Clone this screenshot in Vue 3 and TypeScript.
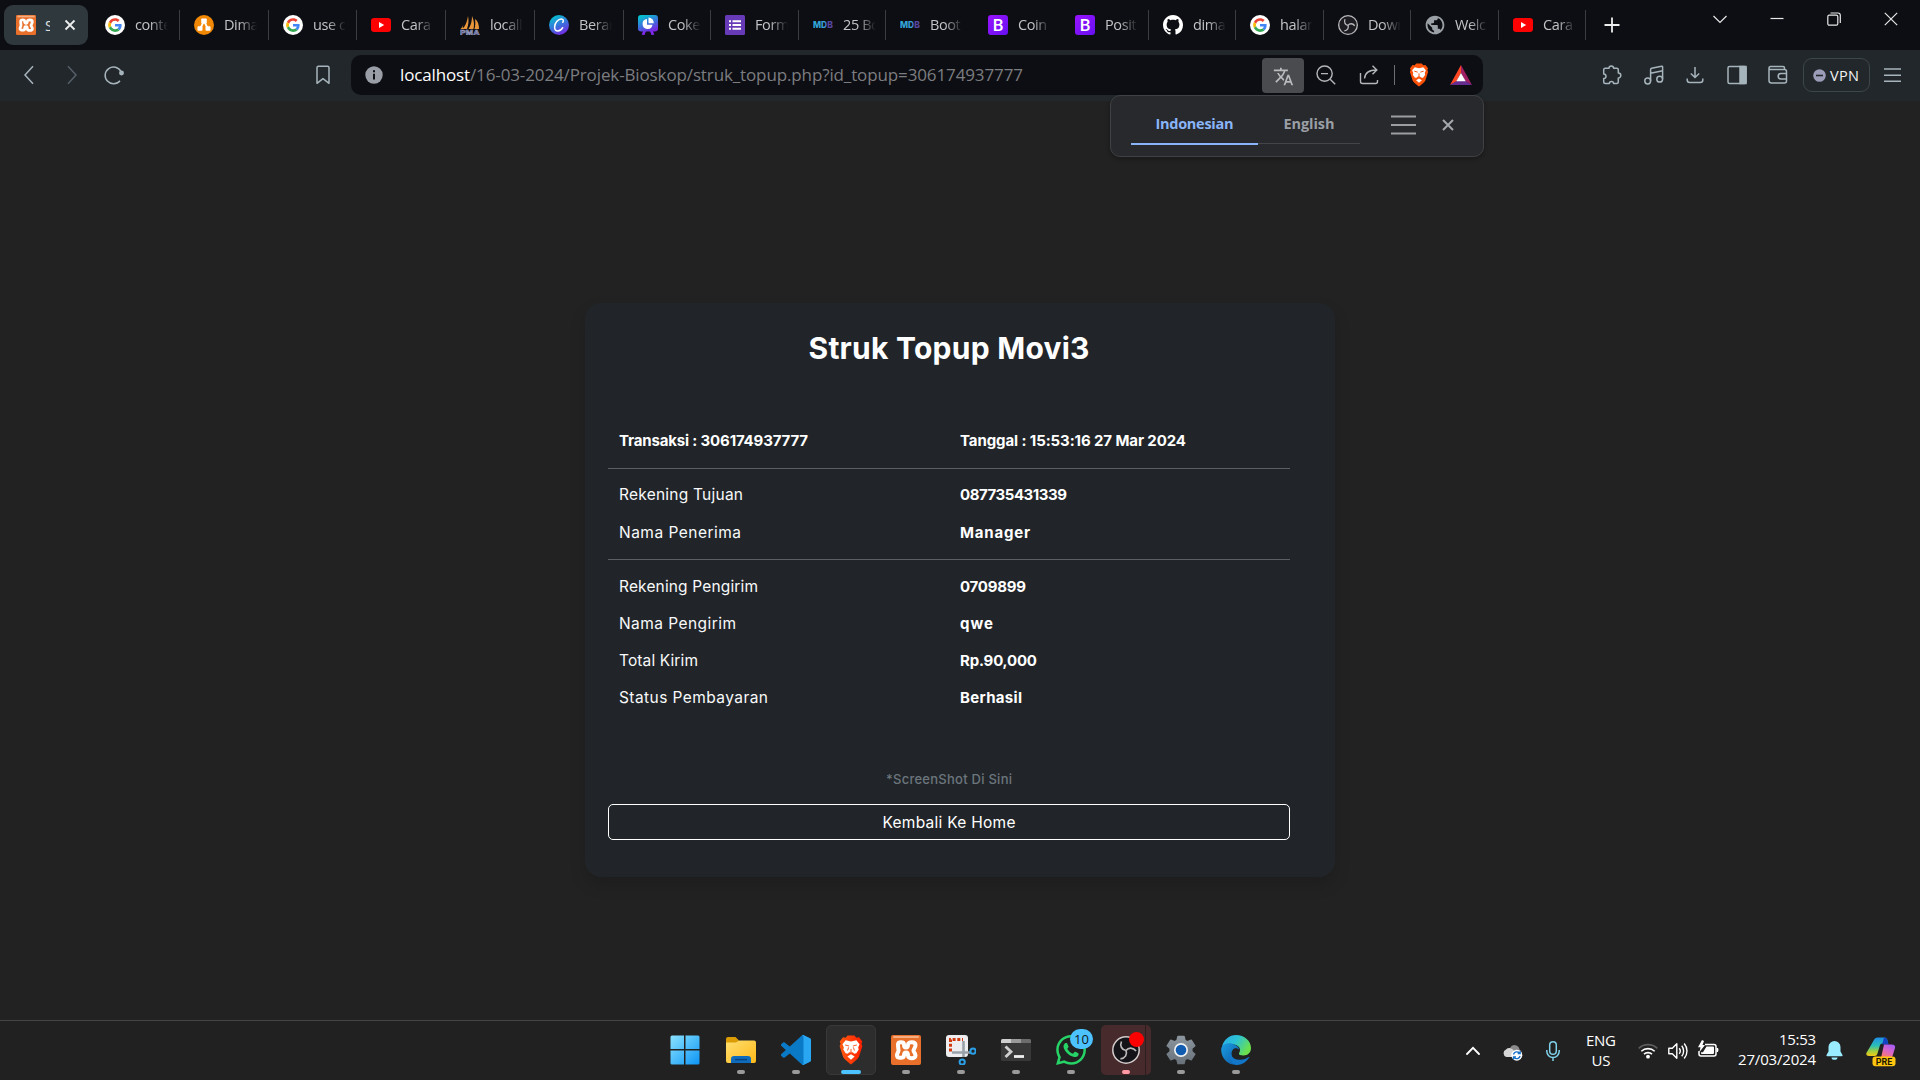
<script setup lang="ts">
import type { Directive } from 'vue'

interface Tab {
  icon: string
  title: string
  width: number
  divider: boolean
}

interface Row {
  label: string
  labelWidth: number
  value: string
  valueWidth: number
}

// Spreads a label over a given width by adjusting its tracking.
const vFit: Directive<HTMLElement, number> = {
  mounted(el, binding) {
    const count = (el.textContent ?? '').length
    if (count < 2) return
    const natural = el.getBoundingClientRect().width
    const tracking = (binding.value - natural) / (count - 1)
    el.style.letterSpacing = `${tracking}px`
    el.style.marginRight = `${-tracking}px`
  },
}

const tabs: Tab[] = [
  { icon: 'google', title: 'conte', width: 89, divider: true },
  { icon: 'drawio', title: 'Dima', width: 89, divider: true },
  { icon: 'google', title: 'use c', width: 88, divider: true },
  { icon: 'youtube', title: 'Cara', width: 89, divider: true },
  { icon: 'pma', title: 'locall', width: 89, divider: true },
  { icon: 'canva', title: 'Beran', width: 89, divider: true },
  { icon: 'deck', title: 'Coke', width: 87, divider: true },
  { icon: 'form', title: 'Form', width: 88, divider: true },
  { icon: 'mdb', title: '25 Bo', width: 87, divider: true },
  { icon: 'mdb', title: 'Boot', width: 88, divider: false },
  { icon: 'bootstrap', title: 'Coin', width: 87, divider: false },
  { icon: 'bootstrap', title: 'Posit', width: 88, divider: true },
  { icon: 'github', title: 'dima', width: 87, divider: true },
  { icon: 'google', title: 'halam', width: 88, divider: true },
  { icon: 'obs', title: 'Down', width: 87, divider: true },
  { icon: 'globe', title: 'Welc', width: 88, divider: true },
  { icon: 'youtube', title: 'Cara', width: 87, divider: true },
]

const head: Row = { label: 'Transaksi : 306174937777', labelWidth: 189, value: 'Tanggal : 15:53:16 27 Mar 2024', valueWidth: 226 }

const groups: Row[][] = [
  [
    { label: 'Rekening Tujuan', labelWidth: 124, value: '087735431339', valueWidth: 107 },
    { label: 'Nama Penerima', labelWidth: 122, value: 'Manager', valueWidth: 70 },
  ],
  [
    { label: 'Rekening Pengirim', labelWidth: 139, value: '0709899', valueWidth: 66 },
    { label: 'Nama Pengirim', labelWidth: 117, value: 'qwe', valueWidth: 33 },
    { label: 'Total Kirim', labelWidth: 79, value: 'Rp.90,000', valueWidth: 77 },
    { label: 'Status Pembayaran', labelWidth: 149, value: 'Berhasil', valueWidth: 62 },
  ],
]

const apps: string[] = ['windows', 'explorer', 'vscode', 'brave', 'xampp', 'snip', 'terminal', 'whatsapp', 'obs', 'settings', 'edge']
</script>

<template>
  <div class="desktop">
    <svg class="defs" width="0" height="0">
      <defs>
        <linearGradient id="g-win" x1="0" y1="0" x2="1" y2="1"><stop offset="0" stop-color="#8be3ff" /><stop offset="1" stop-color="#0d95f5" /></linearGradient>
        <linearGradient id="g-folder" x1="0" y1="0" x2="1" y2="1"><stop offset="0" stop-color="#ffdf70" /><stop offset="1" stop-color="#ffb918" /></linearGradient>
        <linearGradient id="g-brave" x1="0" y1="0" x2="1" y2="0"><stop offset="0" stop-color="#ff5a10" /><stop offset="1" stop-color="#ff1f00" /></linearGradient>
        <linearGradient id="g-canva" x1="0.2" y1="0" x2="0.7" y2="1"><stop offset="0" stop-color="#00c8cf" /><stop offset="0.55" stop-color="#3b6fdc" /><stop offset="1" stop-color="#7a24e4" /></linearGradient>
        <linearGradient id="g-boot" x1="0" y1="0" x2="1" y2="1"><stop offset="0" stop-color="#9a13ff" /><stop offset="1" stop-color="#6610f2" /></linearGradient>
        <linearGradient id="g-mdb" x1="0" y1="0" x2="1" y2="0"><stop offset="0" stop-color="#2fa8d8" /><stop offset="0.6" stop-color="#379fd8" /><stop offset="0.7" stop-color="#5545a0" /><stop offset="1" stop-color="#5545a0" /></linearGradient>
        <linearGradient id="g-edge" x1="0" y1="0" x2="1" y2="0.5"><stop offset="0" stop-color="#2aa9e8" /><stop offset="0.5" stop-color="#2cc3d5" /><stop offset="1" stop-color="#6be04c" /></linearGradient>
        <linearGradient id="g-edge2" x1="0" y1="0" x2="1" y2="1"><stop offset="0" stop-color="#1b9de2" /><stop offset="1" stop-color="#0c59a4" /></linearGradient>
        <linearGradient id="g-gear" x1="0" y1="0" x2="0" y2="1"><stop offset="0" stop-color="#8b959d" /><stop offset="1" stop-color="#69727a" /></linearGradient>
        <linearGradient id="g-cop1" x1="0" y1="0" x2="0" y2="1"><stop offset="0" stop-color="#1f8fe8" /><stop offset="0.45" stop-color="#2bbfb5" /><stop offset="0.75" stop-color="#a5cf3c" /><stop offset="1" stop-color="#f6c916" /></linearGradient>
        <linearGradient id="g-cop2" x1="0.8" y1="0" x2="0.3" y2="1"><stop offset="0" stop-color="#a35cf5" /><stop offset="0.5" stop-color="#d966c9" /><stop offset="1" stop-color="#fb7b6a" /></linearGradient>
      </defs>
    </svg>

    <header class="tabs">
      <div class="tab-active">
        <svg width="20" height="20" viewBox="0 0 30 30">
          <rect width="30" height="30" rx="2" fill="#e8702a" /><rect x="2" y="1" width="26" height="2.5" fill="#f5ad82" />
          <path d="M7 9.500c0-3 6-3 6 0 0 2 1 3 2 3s2-1 2-3c0-3 7.500-3 7.500 .5 0 3-2 4-2 5.500s2 2.500 2 5c0 3.500-7.500 3.500-7.500 0 0-2-1-3-2-3s-2 1-2 3c0 3-7 3-7 0 0-2.500 1.500-3.500 1.500-5s-.5-3.500-.5-6z" fill="none" stroke="#fff" stroke-width="4.200" stroke-linejoin="round" />
        </svg>
        <span class="tab-cut">S</span>
        <svg class="tab-close" width="12" height="12" viewBox="0 0 12 12" stroke="#eceded" stroke-width="1.8"><path d="M1.500 1.500l9 9M10.500 1.500l-9 9" /></svg>
      </div>
      <div v-for="(tab, i) in tabs" :key="i" class="tab" :class="{ divided: tab.divider }" :style="{ width: tab.width + 'px' }">
        <svg v-if="tab.icon === 'google'" width="20" height="20" viewBox="0 0 48 48">
          <circle cx="24" cy="24" r="24" fill="#fff" />
          <g transform="translate(7.500 7.500) scale(.69)">
            <path fill="#EA4335" d="M24 9.500c3.540 0 6.710 1.220 9.210 3.600l6.850-6.850C35.900 2.380 30.470 0 24 0 14.620 0 6.510 5.380 2.560 13.220l7.980 6.190C12.430 13.720 17.740 9.500 24 9.500z" />
            <path fill="#4285F4" d="M46.980 24.550c0-1.570-.15-3.090-.38-4.550H24v9.020h12.940c-.58 2.960-2.260 5.480-4.780 7.180l7.730 6c4.510-4.180 7.090-10.360 7.090-17.650z" />
            <path fill="#FBBC05" d="M10.530 28.590c-.48-1.450-.76-2.990-.76-4.590s.27-3.140.76-4.590l-7.980-6.190C.92 16.460 0 20.120 0 24c0 3.880.92 7.540 2.560 10.780l7.970-6.190z" />
            <path fill="#34A853" d="M24 48c6.480 0 11.930-2.130 15.890-5.810l-7.730-6c-2.150 1.450-4.920 2.300-8.160 2.300-6.260 0-11.570-4.220-13.470-9.910l-7.980 6.190C6.510 42.620 14.620 48 24 48z" />
          </g>
        </svg>
        <svg v-else-if="tab.icon === 'drawio'" width="20" height="20" viewBox="0 0 20 20">
          <circle cx="10" cy="10" r="10" fill="#f08705" /><path d="M10 6L6 14M10 6l4 8" stroke="#fff" stroke-width="1.800" /><rect x="7.200" y="3.500" width="5.600" height="5" rx=".8" fill="#fff" /><rect x="3.500" y="11.300" width="5" height="4.500" rx=".8" fill="#fff" /><rect x="11.500" y="11.300" width="5" height="4.500" rx=".8" fill="#fff" />
        </svg>
        <svg v-else-if="tab.icon === 'youtube'" width="20" height="20" viewBox="0 0 20 20"><rect y="3" width="20" height="14" rx="3.200" fill="#f00" /><path d="M8 7l5.200 3L8 13z" fill="#fff" /></svg>
        <svg v-else-if="tab.icon === 'pma'" width="20" height="20" viewBox="0 0 20 20">
          <path d="M8 1c1 4 .5 9-1 13H2c3-2 5-7 6-13zM12 1c2 4 2.500 9 1.500 13H8.500C11 10 12 6 12 1zM15 4c3 2 4 6 4 10h-4.500c1-3 1-7 .5-10zM3.500 8c0 2-1 4-3 6h2z" fill="#e9963a" />
          <text x="0" y="20" font-size="8" font-weight="700" fill="#4a4e80" stroke="#a9add0" stroke-width=".5" textLength="19.500" lengthAdjust="spacingAndGlyphs" font-family="Liberation Sans, sans-serif">PMA</text>
        </svg>
        <svg v-else-if="tab.icon === 'canva'" width="20" height="20" viewBox="0 0 20 20"><circle cx="10" cy="10" r="10" fill="url(#g-canva)" /><path d="M13.800 7.300c1-1.500.5-3.400-1.400-3.400C9 3.900 5.600 8 5.600 12c0 2.500 1.300 4 3.200 4 2 0 3.800-1.300 4.900-3.300" fill="none" stroke="#fff" stroke-width="1.500" stroke-linecap="round" /></svg>
        <svg v-else-if="tab.icon === 'deck'" width="20" height="20" viewBox="0 0 20 20"><path d="M7 15L5 20M13 15l2 5" stroke="#7d2ae8" stroke-width="2.800" /><rect width="20" height="16.500" rx="3" fill="url(#g-canva)" /><path d="M9 4a5 5 0 1 0 5.500 5.800H9z" fill="#fff" /><path d="M10.500 2.600a5.600 5.600 0 0 1 5.300 5.600h-5.300z" fill="#fff" /></svg>
        <svg v-else-if="tab.icon === 'form'" width="20" height="20" viewBox="0 0 20 20"><rect width="20" height="20" rx="1.500" fill="#673ab7" /><path d="M4 6.200h2M4 10h2M4 13.800h2M7.500 6.200H16M7.500 10H16M7.500 13.800H16" stroke="#fff" stroke-width="2" /></svg>
        <svg v-else-if="tab.icon === 'mdb'" width="20" height="20" viewBox="0 0 20 20"><text x="0" y="13.200" font-size="9" font-weight="800" textLength="20" lengthAdjust="spacingAndGlyphs" fill="url(#g-mdb)" font-family="Inter, sans-serif">MDB</text></svg>
        <svg v-else-if="tab.icon === 'bootstrap'" width="20" height="20" viewBox="0 0 20 20"><rect width="20" height="20" rx="3" fill="url(#g-boot)" /><text x="10" y="16" text-anchor="middle" font-size="17" font-weight="500" fill="#fff" font-family="Roboto, sans-serif">B</text></svg>
        <svg v-else-if="tab.icon === 'github'" width="20" height="20" viewBox="0 0 16 16"><path fill="#fff" d="M8 0C3.580 0 0 3.580 0 8c0 3.540 2.290 6.530 5.470 7.590.4.070.55-.17.55-.38 0-.19-.01-.82-.01-1.490-2.010.37-2.530-.49-2.690-.94-.09-.23-.48-.94-.82-1.130-.28-.15-.68-.52-.01-.53.63-.01 1.080.58 1.230.82.72 1.210 1.870.87 2.330.66.07-.52.28-.87.51-1.070-1.780-.2-3.640-.89-3.640-3.950 0-.87.31-1.590.82-2.150-.08-.2-.36-1.020.08-2.120 0 0 .67-.21 2.200.82.64-.18 1.320-.27 2-.27s1.360.09 2 .27c1.530-1.040 2.200-.82 2.200-.82.44 1.100.16 1.920.08 2.120.51.56.82 1.270.82 2.150 0 3.070-1.870 3.750-3.650 3.950.29.25.54.73.54 1.480 0 1.070-.01 1.930-.01 2.200 0 .21.15.46.55.38A8.010 8.010 0 0016 8c0-4.420-3.580-8-8-8z" /></svg>
        <svg v-else-if="tab.icon === 'obs'" width="20" height="20" viewBox="0 0 30 30"><circle cx="15" cy="15" r="14" fill="#1d1c20" stroke="#b9b9bb" stroke-width="2" /><g fill="none" stroke="#b9b9bb" stroke-width="2"><path d="M15 15.500C11 15 8.500 11 10.500 6.500" /><path d="M15 15.500C11 15 8.500 11 10.500 6.500" transform="rotate(120 15 15.500)" /><path d="M15 15.500C11 15 8.500 11 10.500 6.500" transform="rotate(240 15 15.500)" /></g></svg>
        <svg v-else width="20" height="20" viewBox="1.300 1.300 21.400 21.400"><path fill="#9aa0a6" d="M12 2C6.480 2 2 6.480 2 12s4.480 10 10 10 10-4.480 10-10S17.520 2 12 2zm-1 17.930c-3.950-.49-7-3.850-7-7.930 0-.62.080-1.210.210-1.790L9 15v1c0 1.100.9 2 2 2v1.930zm6.900-2.540c-.26-.81-1-1.390-1.900-1.390h-1v-3c0-.55-.45-1-1-1H8v-2h2c.55 0 1-.45 1-1V7h2c1.100 0 2-.9 2-2v-.41c2.930 1.190 5 4.060 5 7.410 0 2.080-.8 3.970-2.100 5.390z" /></svg>
        <span class="tab-title">{{ tab.title }}</span>
      </div>
      <svg class="plus" width="16" height="16" viewBox="0 0 16 16" stroke="#eceded" stroke-width="1.800"><path d="M8 .5v15M.5 8h15" /></svg>
      <div class="window-buttons">
        <svg width="14" height="14" viewBox="0 0 14 14"><path d="M.5 4L7 10.500 13.500 4" /></svg>
        <svg width="14" height="14" viewBox="0 0 14 14"><path d="M.5 6.500h13" /></svg>
        <svg width="14" height="14" viewBox="0 0 14 14"><rect x=".8" y="3.200" width="10" height="10" rx="1.500" /><path d="M3.500 1h7.500q2.300 0 2.300 2.300V11" /></svg>
        <svg width="14" height="14" viewBox="0 0 14 14"><path d="M.8.8l12.400 12.400M13.200.8L.8 13.200" /></svg>
      </div>
    </header>

    <nav class="toolbar">
      <div class="nav-left">
        <svg width="20" height="20" viewBox="0 0 20 20" stroke="#a6b4bc"><path d="M14 1.300L6 10l8 8.700" /></svg>
        <svg width="20" height="20" viewBox="0 0 20 20" stroke="#56606a"><path d="M6 1.300L14 10l-8 8.700" /></svg>
        <svg width="20" height="20" viewBox="0 0 20 20" stroke="#a6b4bc"><path d="M17 6.500A8.400 8.400 0 1 0 16 15.800" /><circle cx="17.500" cy="8" r="1.700" fill="#a6b4bc" /></svg>
      </div>
      <svg class="bookmark" width="14" height="20" viewBox="0 0 14 20" fill="none" stroke="#a6b4bc" stroke-width="1.500"><path d="M1 2.800q0-1.500 1.500-1.500h9q1.500 0 1.500 1.500v15.500L7 13.700l-6 4.600z" stroke-linejoin="round" /></svg>

      <div class="address">
        <svg class="info" width="18" height="18" viewBox="0 0 18 18"><circle cx="9" cy="9" r="8.700" fill="#9a9ea6" /><path d="M9 7.800v5.600M9 4.300v2" stroke="#0d0e13" stroke-width="2" /></svg>
        <div class="url"><span v-fit="70" class="fit host">localhost</span><span v-fit="553" class="fit">/16-03-2024/Projek-Bioskop/struk_topup.php?id_topup=306174937777</span></div>
        <div class="translate"><svg width="21" height="21" viewBox="0 0 24 24" fill="#b9bbbd"><path d="M12.870 15.070l-2.540-2.510.03-.03c1.740-1.940 2.980-4.170 3.710-6.530H17V4h-7V2H8v2H1v1.990h11.170C11.500 7.920 10.440 9.750 9 11.350 8.070 10.320 7.300 9.190 6.690 8h-2c.73 1.630 1.730 3.170 2.980 4.560l-5.090 5.020L4 19l5-5 3.110 3.110.76-2.040zM18.500 10h-2L12 22h2l1.120-3h4.750L21 22h2l-4.500-12zm-2.620 7l1.620-4.330L19.120 17h-3.240z" /></svg></div>
        <svg class="glass" width="20" height="20" viewBox="0 0 20 20"><circle cx="8.600" cy="8.600" r="7.600" /><path d="M14.200 14.200l5 5M5 8.600h7" /></svg>
        <svg class="share" width="20" height="20" viewBox="0 0 20 20"><path d="M1.500 8v8.500q0 2 2 2h13q2 0 2-2v-1.500M5.500 13.500C6 7.500 10 5 17.500 5M13.500.8L17.800 5l-4.300 4.200" /></svg>
        <i class="bar-line"></i>
        <svg class="brave-sm" width="20" height="24" viewBox="1 0 22 28"><path d="M7 2.500L8.800.5h6.400L17 2.500l2.500-.3L22.500 6l-.7 2.200.8 2.300-3.100 9.500C19 21.500 18 22.600 12 27.500 6 22.600 5 21.500 4.500 20L1.400 10.500l.8-2.300L1.500 6l3-3.800z" fill="#fb5209" /><path d="M7 5l5 1 5-1 3 3.600-1.300 3 .5 2L17 17l-2 .5L12 16l-3 1.500L7 17l-2.200-3.400.5-2L4 8.600zM12 18l3.400 2-3.400 3-3.400-3z" fill="#fff" /><path d="M6.500 9.500l4 1.200M17.500 9.500l-4 1.200M12 12v3.500M9 17.500l3-1.800 3 1.800" stroke="#fb5209" stroke-width="1.100" fill="none" /></svg>
        <svg class="bat" width="22" height="20" viewBox="0 0 22 20"><path d="M11 0L0 20l6.500-3.500L11 8z" fill="#ff4724" /><path d="M11 0l11 20-6.500-3.500L11 8z" fill="#9e1f63" /><path d="M0 20h22l-6.500-4h-9z" fill="#662d91" /><path d="M11 8l4.700 8.300H6.300z" fill="#fff" /></svg>
      </div>

      <div class="extras">
        <svg width="20" height="20" viewBox="0 0 20 20"><path d="M7 3.200a2.300 2.300 0 0 1 4.600 0h3.200q1.500 0 1.500 1.500v3.300a2.300 2.300 0 0 1 0 5v4q0 1.500-1.500 1.500h-3.200a2.100 2.100 0 0 0-4.200 0H3.200q-1.500 0-1.500-1.500v-3.500a2.300 2.300 0 0 0 0-4.600V4.700q0-1.500 1.500-1.500z" stroke-linejoin="round" /></svg>
        <svg width="20" height="20" viewBox="0 0 20 20"><circle cx="3.700" cy="16" r="2.900" /><circle cx="15.700" cy="14.200" r="2.900" /><path d="M6.600 16V4.500q0-1 1-1.200l10-2q1-.2 1 .8v12M6.600 8.200l12-2.400" /></svg>
        <svg width="20" height="20" viewBox="0 0 20 20"><path d="M10 2v10.500M5.800 8.500l4.200 4 4.200-4M2.200 13.500v1.500q0 2.500 2.500 2.500h10.600q2.500 0 2.500-2.500v-1.500" /></svg>
        <svg width="20" height="20" viewBox="0 0 20 20"><rect x="1" y="1.500" width="18" height="17" rx="1.500" /><path d="M13 1.500h6v17h-6z" fill="#a6b4bc" /></svg>
        <svg width="20" height="20" viewBox="0 0 20 20"><path d="M16.500 4.500V3q0-1.500-1.500-1.500H2.500Q1 1.500 1 3v12.500Q1 18 3.500 18h13q2 0 2-2V6.500q0-2-2-2H2.500Q1 4.500 1 3M18.500 8.500H13a2.800 2.800 0 0 0 0 5.600h5.500z" /></svg>
      </div>
      <div class="vpn"><svg width="13" height="13" viewBox="0 0 13 13"><circle cx="6.500" cy="6.500" r="6.300" fill="#9a9cb8" /><path d="M3 6.500h7" stroke="#23282c" stroke-width="1.600" /></svg><span v-fit="29" class="fit">VPN</span></div>
      <svg class="menu" width="17" height="14" viewBox="0 0 17 14" stroke="#a6b4bc" stroke-width="1.400"><path d="M0 1h17M0 7.200h17M0 13.200h17" /></svg>

      <div class="bubble">
        <div class="lang on"><span v-fit="78" class="fit">Indonesian</span></div>
        <div class="lang"><span v-fit="51" class="fit">English</span></div>
        <svg class="lines" width="25" height="20" viewBox="0 0 25 20" stroke="#9a9da1" stroke-width="1.800"><path d="M0 1.500h25M0 10h25M0 18.500h25" /></svg>
        <svg class="dismiss" width="12" height="12" viewBox="0 0 12 12" stroke="#a5a8ac" stroke-width="2"><path d="M1 1l10 10M11 1L1 11" /></svg>
      </div>
    </nav>

    <main>
      <section class="card">
        <h1><span v-fit="281" class="fit">Struk Topup Movi3</span></h1>
        <div class="row strong">
          <div><span v-fit="head.labelWidth" class="fit">{{ head.label }}</span></div>
          <div><span v-fit="head.valueWidth" class="fit">{{ head.value }}</span></div>
        </div>
        <template v-for="(group, g) in groups" :key="g">
          <hr />
          <div v-for="row in group" :key="row.label" class="row">
            <div><span v-fit="row.labelWidth" class="fit">{{ row.label }}</span></div>
            <div class="strong"><span v-fit="row.valueWidth" class="fit">{{ row.value }}</span></div>
          </div>
        </template>
        <p class="note"><span v-fit="126" class="fit">*ScreenShot Di Sini</span></p>
        <a class="home"><span v-fit="133" class="fit">Kembali Ke Home</span></a>
      </section>
    </main>

    <footer class="taskbar">
      <div class="apps">
        <div v-for="app in apps" :key="app" class="slot" :class="app">
          <svg v-if="app === 'windows'" width="30" height="30" viewBox="0 0 30 30"><path fill="url(#g-win)" d="M2 .5h12V14H.5V2Q.5.500 2 .5zM15.500.5H28q1.500 0 1.500 1.500v12h-14zM.5 15.500H14v14H2Q.5 29.500.5 28zM15.500 15.500h14V28q0 1.500-1.500 1.500H15.500z" /></svg>
          <svg v-else-if="app === 'explorer'" width="30" height="30" viewBox="0 0 30 30"><path d="M0 4q0-2 2-2h7.500l3.500 3.500V9H0z" fill="#dc9c06" /><path d="M0 7.500h10L13 5.500h15q2 0 2 2V26q0 2-2 2H2q-2 0-2-2z" fill="url(#g-folder)" /><path d="M5 28v-4q0-3 3-3h14q3 0 3 3v4z" fill="#0f6cbd" /><path d="M9 24.600h12" stroke="#07427a" stroke-width="1.400" /></svg>
          <svg v-else-if="app === 'vscode'" width="30" height="30" viewBox="0 0 100 100"><path fill="#0b7ac6" d="M70.900 99.300C72.500 99.900 74.300 99.900 75.900 99.100L96.500 89.200C98.600 88.200 100 86 100 83.600V16.400C100 14 98.600 11.800 96.500 10.800L75.900.9C73.800-.1 71.300.1 69.500 1.400L29.400 38 12.200 25C10.600 23.800 8.400 23.900 6.900 25.200L1.400 30.300C-.5 31.900-.5 34.800 1.400 36.400L16.200 50 1.400 63.600C-.5 65.200-.5 68.100 1.400 69.700L6.900 74.800C8.400 76.100 10.600 76.200 12.200 75L29.400 62 68.800 97.900zM75 27.300L45.100 50 75 72.700z" /><path fill="#2aa7f3" d="M75.900.9l20.600 9.900c2.100 1 3.500 3.200 3.500 5.600v67.200c0 2.400-1.400 4.600-3.500 5.600l-20.600 9.900c-2 1-4 .5-5.500-.5 2.500 0 4.600-2 4.600-4.600V6c0-2.600-2.100-4.600-4.600-4.600 1.500-1 3.500-1.500 5.500-.5z" /></svg>
          <svg v-else-if="app === 'brave'" width="26" height="30" viewBox="0 0 24 28"><path d="M7 2.500L8.800.5h6.400L17 2.500l2.500-.3L22.500 6l-.7 2.200.8 2.300-3.100 9.500C19 21.500 18 22.600 12 27.500 6 22.600 5 21.500 4.500 20L1.400 10.500l.8-2.300L1.500 6l3-3.800z" fill="url(#g-brave)" /><path d="M7 5l5 1 5-1 3 3.600-1.300 3 .5 2L17 17l-2 .5L12 16l-3 1.500L7 17l-2.200-3.400.5-2L4 8.600zM12 18l3.400 2-3.400 3-3.400-3z" fill="#fff" /><path d="M6.500 9.300l3.800 1M17.500 9.300l-3.800 1M12 13v2.500M9 17.500l3-1.800 3 1.800M9.800 11.500l-1 3M14.200 11.500l1 3" stroke="#fb4209" stroke-width=".8" fill="none" /></svg>
          <svg v-else-if="app === 'xampp'" width="30" height="30" viewBox="0 0 30 30"><rect width="30" height="30" rx="2" fill="#e8702a" /><rect x="2" y="1" width="26" height="2" rx="1" fill="#f5ad82" /><path d="M7 9.500c0-3 6-3 6 0 0 2 1 3 2 3s2-1 2-3c0-3 7.500-3 7.500 .5 0 3-2 4-2 5.500s2 2.500 2 5c0 3.500-7.500 3.500-7.500 0 0-2-1-3-2-3s-2 1-2 3c0 3-7 3-7 0 0-2.500 1.500-3.500 1.500-5s-.5-3.500-.5-6z" fill="none" stroke="#fff" stroke-width="4" stroke-linejoin="round" /></svg>
          <svg v-else-if="app === 'snip'" width="30" height="30" viewBox="0 0 30 30"><rect width="22" height="22" rx="3" fill="#eeeef0" /><path d="M4.500 16.500V4.500H17" fill="none" stroke="#d1390c" stroke-width="3" stroke-dasharray="3 1.700" /><path d="M17.500 6v16M6 17.500h18" stroke="#9aa1a8" stroke-width="2.600" /><circle cx="16.200" cy="27" r="2.600" fill="none" stroke="#2aa0e8" stroke-width="2" /><circle cx="27" cy="16.200" r="2.600" fill="none" stroke="#2aa0e8" stroke-width="2" /></svg>
          <svg v-else-if="app === 'terminal'" width="30" height="30" viewBox="0 0 30 30"><rect y="4" width="30" height="22" rx="1.500" fill="#383838" /><path d="M0 8V5.500Q0 4 1.500 4H10v4z" fill="#cfcfcf" /><path d="M10 4h10v4H10z" fill="#9a9a9a" /><path d="M20 4h8.500Q30 4 30 5.500V8H20z" fill="#6c6c6c" /><path d="M4.500 11.500l5.500 5.200-5.500 5.200" fill="none" stroke="#cfcfcf" stroke-width="2.800" /><path d="M13 21.500h10" stroke="#efefef" stroke-width="2.800" /></svg>
          <svg v-else-if="app === 'whatsapp'" width="30" height="30" viewBox="0 0 24 24"><path fill="#25d366" d="M17.472 14.382c-.297-.149-1.758-.867-2.030-.967-.273-.099-.471-.148-.67.15-.197.297-.767.966-.94 1.164-.173.199-.347.223-.644.075-.297-.15-1.255-.463-2.390-1.475-.883-.788-1.480-1.761-1.653-2.059-.173-.297-.018-.458.13-.606.134-.133.298-.347.446-.52.149-.174.198-.298.298-.497.099-.198.05-.371-.025-.52-.075-.149-.669-1.612-.916-2.207-.242-.579-.487-.5-.669-.51-.173-.008-.371-.01-.57-.01-.198 0-.52.074-.792.372-.272.297-1.040 1.016-1.040 2.479 0 1.462 1.065 2.875 1.213 3.074.149.198 2.096 3.200 5.077 4.487.709.306 1.262.489 1.694.625.712.227 1.360.195 1.871.118.571-.085 1.758-.719 2.006-1.413.248-.694.248-1.289.173-1.413-.074-.124-.272-.198-.57-.347m-5.421 7.403h-.004a9.870 9.870 0 01-5.031-1.378l-.361-.214-3.741.982.998-3.648-.235-.374a9.860 9.860 0 01-1.510-5.260c.001-5.450 4.436-9.884 9.888-9.884 2.640 0 5.122 1.030 6.988 2.898a9.825 9.825 0 012.893 6.994c-.003 5.450-4.437 9.884-9.885 9.884m8.413-18.297A11.815 11.815 0 0012.050 0C5.495 0 .16 5.335.157 11.892c0 2.096.547 4.142 1.588 5.945L.057 24l6.305-1.654a11.882 11.882 0 005.683 1.448h.005c6.554 0 11.890-5.335 11.893-11.893a11.821 11.821 0 00-3.480-8.413z" /></svg>
          <svg v-else-if="app === 'obs'" width="30" height="30" viewBox="0 0 30 30"><circle cx="15" cy="15" r="13.200" fill="#141317" stroke="#d3cdcd" stroke-width="1.500" /><g fill="none" stroke="#bdb8b9" stroke-width="1.700"><path d="M15 15.500C11 15 8.500 11 10.500 6.500" /><path d="M15 15.500C11 15 8.500 11 10.500 6.500" transform="rotate(120 15 15.500)" /><path d="M15 15.500C11 15 8.500 11 10.500 6.500" transform="rotate(240 15 15.500)" /></g></svg>
          <svg v-else-if="app === 'settings'" width="30" height="30" viewBox="0 0 30 30"><path fill="url(#g-gear)" stroke="url(#g-gear)" stroke-width="1.500" stroke-linejoin="round" d="M12 1.500h6l1 4 2.500 1.300 3.800-1.500 3.500 5.500-3 2.700v3l3 2.700-3.500 5.500-3.800-1.500L19 24.500l-1 4h-6l-1-4-2.500-1.300-3.800 1.500-3.500-5.500 3-2.700v-3l-3-2.700 3.500-5.500 3.800 1.500L11 5.500z" /><circle cx="15" cy="15" r="7" fill="#eef0f2" /><circle cx="15" cy="15" r="5.300" fill="#0f5cb0" /></svg>
          <svg v-else width="30" height="30" viewBox="0 0 30 30"><path d="M1 11.500C2.800 4.500 8.500 0 15 0c8.500 0 15 6 15 13 0 4.800-3.500 7.500-7.500 7.500-3 0-5-1-4.500-2.300 2-2.700 1.500-7.700-5-8.700C8 9 3 9.500 1 11.500z" fill="url(#g-edge)" /><path d="M.2 15.500C-.3 9.500 6 7.200 11.500 8.800c4 1.200 6.500 3.700 6.800 6.200-1-1.500-3-2-5-1.500-3 1.500-4.800 7.500 1.200 13l3.500 3C8 31.500.5 24 .2 15.500z" fill="url(#g-edge2)" /><path d="M10.500 14.500c-1.500 4 0 9 5.500 10 5 1 9-.5 11.700-2.500.5-.3.800 0 .5.500C25.500 27 21 30 15.500 30 9 29 6 20 10.500 14.500z" fill="#1276c9" /></svg>
          <b v-if="app === 'whatsapp'" class="count">10</b>
          <b v-if="app === 'obs'" class="rec"></b>
          <i v-if="app !== 'windows'" class="mark"></i>
        </div>
      </div>

      <div class="tray">
        <svg class="up" width="14" height="9" viewBox="0 0 14 9" fill="none" stroke="#fff" stroke-width="1.800"><path d="M1 8l6-6.200L13 8" stroke-linecap="round" /></svg>
        <svg class="cloud" width="21" height="18" viewBox="0 0 21 18"><path d="M8 5a5 5 0 0 1 9.500 1.500 4 4 0 0 1-1 7.500H9z" fill="#8b8b8b" /><path d="M4.300 14A4 4 0 0 1 4 6.500 5 5 0 0 1 12 8l3 6z" fill="#d6d6d6" /><circle cx="14.800" cy="12.200" r="5.500" fill="#fff" /><path d="M11.500 11.500a3.500 3.500 0 0 1 6-1.500M18.200 8v2.500h-2.500M18.100 13a3.500 3.500 0 0 1-6 1.500M11.500 16.400v-2.500H14" fill="none" stroke="#1670c9" stroke-width="1.300" /></svg>
        <svg class="mic" width="14" height="20" viewBox="0 0 14 20" fill="none" stroke="#7fd0ea" stroke-width="1.500"><rect x="3.700" y=".8" width="6.600" height="12.500" rx="3.300" /><path d="M.8 9v1.300a6.200 6.200 0 0 0 12.400 0V9M7 16.500V20" /></svg>
        <div class="lang-code"><span v-fit="30" class="fit">ENG</span><span v-fit="19" class="fit">US</span></div>
        <svg class="wifi" width="20" height="16" viewBox="0 0 20 16" fill="none" stroke="#fff" stroke-width="1.600"><path d="M.7 5.300a13.500 13.500 0 0 1 18.600 0" stroke="#5c5c5c" /><path d="M3.300 8.300a9.600 9.600 0 0 1 13.400 0M6 11.200a5.800 5.800 0 0 1 8 0" /><circle cx="10" cy="13.700" r="1.900" fill="#fff" stroke="none" /></svg>
        <svg class="vol" width="20" height="18" viewBox="0 0 20 18" fill="none" stroke="#fff" stroke-width="1.400"><path d="M.8 6.200h3.500L8.800 1.800v14.400L4.300 11.800H.8z" stroke-linejoin="round" /><path d="M11.200 6.200a4.500 4.500 0 0 1 0 5.600M13.700 3.800a8 8 0 0 1 0 10.400M16.200 1.500a11.500 11.500 0 0 1 0 15" /></svg>
        <svg class="batt" width="21" height="18" viewBox="0 0 21 18"><path d="M7 4.500h9q2 0 2 2V14q0 2-2 2H3q-2 0-2-2v-3" fill="none" stroke="#fff" stroke-width="1.500" /><path d="M8.500 6.500h6.500q1 0 1 1V13q0 1-1 1H4q-1 0-1-1v-.8h2zM18.500 8h1.500q1 1.500 0 4h-1.500z" fill="#fff" /><path d="M4 0L0 7.200h2.500L1.500 12 7 5H4.500L6 1z" fill="#fff" /></svg>
        <div class="clock"><span v-fit="37" class="fit">15:53</span><span v-fit="78" class="fit">27/03/2024</span></div>
        <svg class="bell" width="17" height="19" viewBox="0 0 17 19" fill="#99ebff"><path d="M8.500 0a6 6 0 0 0-6 6v4.500L.5 14q-.5 1.300 1 1.300h14q1.500 0 1-1.300l-2-3.500V6a6 6 0 0 0-6-6zM5.500 16.500h6a3 2.300 0 0 1-6 0z" /></svg>
        <svg class="copilot" width="30" height="30" viewBox="0 0 30 30">
          <path d="M8.500 2q1-1.500 3-1.500h7q2 0 2.700 2l1 4H16q-1.500 0-2 1.500L11.300 17q-.6 2-2.500 2H3q-3.500 0-2.600-3z" fill="url(#g-cop1)" /><path d="M18 .5q2.500 0 3.200 2l1.300 5h-6.300z" fill="#1443c4" /><path d="M18 7.500h7.500Q30 7.500 29 11l-2.500 8q-.6 2-2.500 2h-9z" fill="url(#g-cop2)" />
          <rect x="6.500" y="19.500" width="23" height="9.800" rx="3" fill="#ffc50f" /><text x="9.800" y="27.500" font-size="8.500" font-weight="700" textLength="16.500" lengthAdjust="spacingAndGlyphs" fill="#1c1700" font-family="Roboto, sans-serif">PRE</text>
        </svg>
      </div>
    </footer>
  </div>
</template>

<style>
body {
  margin: 0;
  background: #222222;
}
</style>

<style scoped>
.desktop {
  display: flex;
  flex-direction: column;
  width: 1920px;
  height: 1080px;
  overflow: hidden;
  background: #222222;
  color: #fff;
  font-family: 'Open Sans', 'Noto Sans', sans-serif;
}
.desktop * {
  box-sizing: border-box;
}
.defs {
  position: absolute;
}
svg {
  display: block;
  flex: none;
}
.fit {
  display: inline-block;
  flex: none;
  white-space: nowrap;
}

/* tab strip */
.tabs {
  display: flex;
  align-items: center;
  height: 50px;
  flex: none;
  padding-left: 4px;
  background: #0d0e13;
}
.tab-active {
  display: flex;
  align-items: center;
  width: 84px;
  height: 40px;
  margin-right: 3px;
  padding-left: 12px;
  border-radius: 9px;
  background: #2f383d;
}
.tab-cut {
  width: 5px;
  margin-left: 9px;
  overflow: hidden;
  font-size: 14.5px;
  color: #dfe1e2;
}
.tab-close {
  margin-left: 14px;
}
.tab {
  display: flex;
  align-items: center;
  flex: none;
  height: 30px;
  padding-left: 14px;
  border-right: 1px solid transparent;
}
.tab.divided {
  border-right-color: #3b3c40;
}
.tab-title {
  width: 33px;
  margin-left: 10px;
  overflow: hidden;
  white-space: nowrap;
  font-size: 14.5px;
  line-height: 20px;
  letter-spacing: -0.4px;
  color: #c3c4c6;
  mask-image: linear-gradient(to right, #000 45%, transparent 100%);
}
.plus {
  margin-left: 18px;
}
.window-buttons {
  display: flex;
  gap: 43px;
  margin: 0 22px 13px auto;
}
.window-buttons svg {
  fill: none;
  stroke: #e8e8e9;
  stroke-width: 1.2;
}

/* toolbar */
.toolbar {
  position: relative;
  display: flex;
  align-items: center;
  height: 51px;
  flex: none;
  padding-bottom: 1px;
  background: #22272b;
}
.nav-left {
  display: flex;
  gap: 23px;
  width: 316px;
  padding-left: 19px;
}
.nav-left svg,
.extras svg {
  fill: none;
  stroke-width: 1.5;
}
.nav-left svg:last-child {
  margin-left: -1px;
}
.address {
  display: flex;
  align-items: center;
  width: 1132px;
  height: 40px;
  margin-left: 21px;
  padding-left: 14px;
  border-radius: 10px;
  background: #0d0e13;
}
.url {
  display: flex;
  flex: none;
  width: 883px;
  padding-left: 17px;
  font-size: 17px;
  line-height: 24px;
  color: #7c7d80;
}
.host {
  color: #fff;
}
.translate {
  display: flex;
  align-items: center;
  justify-content: center;
  width: 42px;
  height: 35px;
  margin-left: -4px;
  padding-top: 2px;
  border-radius: 4px;
  background: #4a4b4e;
}
.glass {
  margin-left: 12px;
}
.share {
  margin-left: 23px;
}
.glass,
.share {
  fill: none;
  stroke: #b4b7ba;
  stroke-width: 1.4;
}
.bar-line {
  width: 1px;
  height: 20px;
  margin-left: 15px;
  background: #6d6f72;
}
.brave-sm {
  margin-left: 14px;
}
.bat {
  margin-left: 21px;
}
.extras {
  display: flex;
  gap: 21.5px;
  margin-left: 119px;
}
.extras svg {
  stroke: #a6b4bc;
}
.vpn {
  display: flex;
  align-items: center;
  width: 67px;
  height: 34px;
  margin-left: 15px;
  padding-left: 9px;
  border: 1px solid #3c464b;
  border-radius: 9px;
  gap: 4px;
  font-size: 14.5px;
  color: #f2f3f4;
}
.menu {
  margin-left: 14px;
}
.bubble {
  position: absolute;
  z-index: 2;
  top: 45px;
  left: 1110px;
  display: flex;
  align-items: flex-start;
  width: 374px;
  height: 62px;
  padding-left: 20px;
  border: 1px solid #404144;
  border-radius: 10px;
  background: #28292c;
  box-shadow: 0 2px 4px rgba(0, 0, 0, 0.3);
}
.lang {
  display: flex;
  justify-content: center;
  width: 102px;
  height: 48px;
  padding-top: 18px;
  border-bottom: 1px solid #434548;
  font-size: 14.5px;
  font-weight: 700;
  line-height: 20px;
  color: #9a9fa5;
}
.lang.on {
  width: 127px;
  height: 49px;
  border-bottom: 2px solid #8ab4f8;
  color: #8ab4f8;
}
.lines {
  margin: 19px 26px 0 31px;
}
.dismiss {
  margin-top: 23px;
}

/* page */
main {
  flex: 1;
  display: flex;
  justify-content: center;
  align-items: flex-start;
  padding-top: 202px;
  font-family: Inter, 'Open Sans', sans-serif;
}
.card {
  width: 750px;
  height: 574px;
  padding: 23px 45px 0 23px;
  border-radius: 16px;
  background: #212529;
  box-shadow: 0 8px 16px rgba(0, 0, 0, 0.15);
}
h1 {
  margin: 0 0 53px;
  text-align: center;
  font-size: 30px;
  font-weight: 650;
  line-height: 44px;
}
.row {
  display: grid;
  grid-template-columns: 341px 341px;
  height: 37.3px;
  padding-left: 11px;
  align-items: center;
  font-size: 15.5px;
  line-height: 22px;
  color: #f8f9fa;
}
.strong {
  font-size: 15px;
  font-weight: 650;
  color: #fff;
}
hr {
  height: 1px;
  margin: 8px 0 7.5px;
  border: 0;
  background: #5d6062;
}
.row.strong {
  margin-top: -1px;
  margin-bottom: 9px;
}
.note {
  margin: 51px 0 14px;
  text-align: center;
  font-size: 13px;
  font-weight: 550;
  line-height: 22px;
  color: #6c757d;
}
.home {
  display: flex;
  align-items: center;
  justify-content: center;
  height: 36px;
  border: 1px solid #fff;
  border-radius: 5px;
  font-size: 15.5px;
}

/* taskbar */
.taskbar {
  display: flex;
  height: 60px;
  flex: none;
  border-top: 1px solid #454545;
  background: #212121;
}
.apps {
  display: flex;
  gap: 5px;
  padding: 4px 0 0 661px;
}
.slot {
  position: relative;
  display: flex;
  justify-content: center;
  width: 50px;
  height: 50px;
  padding-top: 10px;
  border-radius: 5px;
}
.slot.windows {
  padding-right: 3px;
}
.slot.brave {
  border: 1px solid #383838;
  padding-top: 9px;
  background: #2d2d2d;
}
.slot.obs {
  background: linear-gradient(to right, #472a2b 44px, #2c1d1e 44px, #2c1d1e 45px, #472a2b 45px);
}
.mark {
  position: absolute;
  bottom: 1px;
  left: 50%;
  width: 8px;
  height: 4px;
  margin-left: -4px;
  border-radius: 2px;
  background: #9a9a9a;
}
.brave .mark {
  bottom: 0;
  width: 20px;
  margin-left: -10px;
  background: #4cc2ff;
}
.obs .mark {
  background: #ff99a4;
}
.count {
  position: absolute;
  top: 4px;
  left: 24px;
  width: 23px;
  height: 20px;
  border-radius: 10px;
  background: #4cc2ff;
  color: #101418;
  text-align: center;
  font-size: 13px;
  font-weight: 400;
  line-height: 20px;
}
.rec {
  position: absolute;
  top: 7px;
  left: 28px;
  width: 15px;
  height: 15px;
  border-radius: 50%;
  background: #f00;
}
.tray {
  display: flex;
  align-items: center;
  margin-left: auto;
  padding-right: 24px;
  font-size: 15px;
  line-height: 20px;
}
.cloud {
  margin: 3px 0 0 22px;
}
.mic {
  margin-left: 23px;
}
.lang-code {
  display: flex;
  flex-direction: column;
  align-items: center;
  width: 30px;
  margin: -2px 0 0 26px;
}
.wifi {
  margin-left: 22px;
}
.vol {
  margin-left: 10px;
}
.batt {
  margin: -4px 0 0 10px;
}
.clock {
  display: flex;
  flex-direction: column;
  align-items: flex-end;
  width: 78px;
  margin: -4px 0 0 19px;
}
.bell {
  margin-left: 10px;
}
.copilot {
  margin: 2px 0 0 23px;
}
</style>
